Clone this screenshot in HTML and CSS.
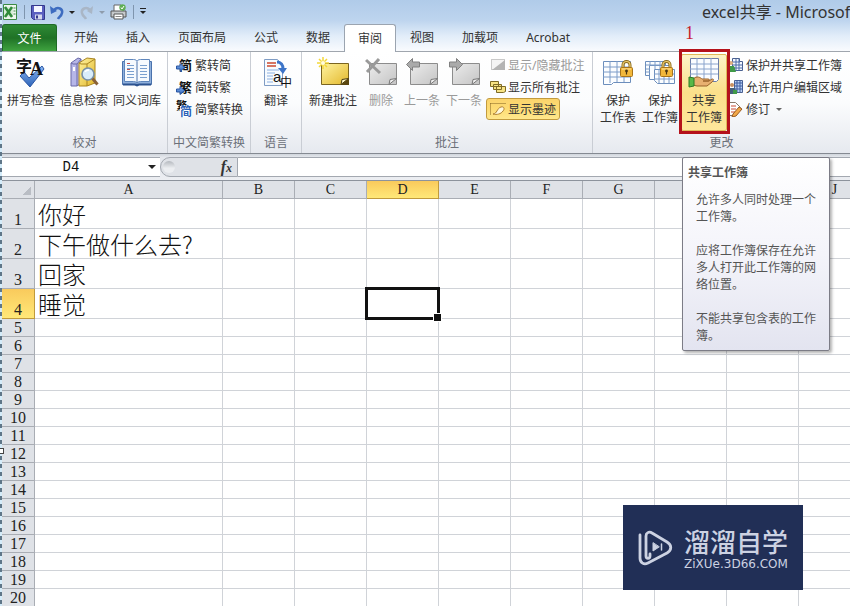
FILE: index.html
```html
<!DOCTYPE html>
<html lang="zh-CN">
<head>
    <meta charset="UTF-8">
    <meta name="viewport" content="width=device-width, initial-scale=1.0">
    <title>excel共享 - Microsoft Excel</title>
    <link rel="stylesheet" href="styles.css">
</head>
<body>
    <!-- shared symbols -->
    <svg class="defs" width="0" height="0">
        <defs>
            <linearGradient id="gold" x1="0" y1="0" x2="1" y2="1">
                <stop offset="0" stop-color="#fff3a0"/><stop offset="1" stop-color="#e3b82c"/>
            </linearGradient>
            <linearGradient id="grey" x1="0" y1="0" x2="1" y2="1">
                <stop offset="0" stop-color="#ececec"/><stop offset="1" stop-color="#c4c4c4"/>
            </linearGradient>
            <linearGradient id="blue" x1="0" y1="0" x2="0" y2="1">
                <stop offset="0" stop-color="#8cb6f0"/><stop offset="1" stop-color="#2a62b8"/>
            </linearGradient>
        </defs>
        <symbol id="lock" viewBox="0 0 13 17">
            <path d="M3 8V5a3.5 3.5 0 0 1 7 0v3" fill="none" stroke="#8a6a1c" stroke-width="3"/>
            <path d="M3 8V5a3.5 3.5 0 0 1 7 0v3" fill="none" stroke="#f0cf72" stroke-width="1.2"/>
            <rect x=".5" y="7.5" width="12" height="9" rx="1" fill="#f2b73a" stroke="#a8741a"/>
            <path d="M2 9h9" stroke="#ffe39a"/>
            <circle cx="6.5" cy="11" r="1.4" fill="#4a3410"/><path d="M6.5 11v3.5" stroke="#4a3410" stroke-width="1.2"/>
        </symbol>
        <symbol id="arrow" viewBox="0 0 9 9">
            <path d="M.5 3h3.500v-2.500l4.500 4-4.500 4v-2.500h-3.500z" fill="url(#blue)" stroke="#2a56a4"/>
        </symbol>
    </svg>

    <div class="app">
        <header class="window-head">
            <div class="title-bar">
                <div class="quick-access">
                    <svg width="16" height="18" viewBox="0 0 16 18"><path d="M1.500 1.500h13v15h-13z" fill="#eef6ee" stroke="#3c8a44"/><path d="M2 4h9v10H2z" fill="#d8ecd8"/><path d="M3 4l7 10M10 4L3 14" stroke="#2f8a3a" stroke-width="2.500"/><path d="M11.500 5h2M11.500 8h2M11.500 11h2" stroke="#3c8a44"/></svg>
                    <span class="sep"></span>
                    <button class="qa-btn" aria-label="保存"><svg width="14" height="15" viewBox="0 0 14 15"><path d="M.5.5h13v14h-11l-2-2z" fill="#5a5fc0" stroke="#34388c"/><path d="M3 1h8v6H3z" fill="#f4f6ff"/><path d="M4 9.500h7v5H4z" fill="#d5d8ec"/><path d="M5 10.500h2v3H5z" fill="#34388c"/></svg></button>
                    <button class="qa-btn" aria-label="撤消"><svg width="14" height="15" viewBox="0 0 14 15"><path d="M4 5c4-4 9-1 8 3-.5 3-3 4-4 6" fill="none" stroke="#3d6cc0" stroke-width="2.500"/><path d="M0 1l1 8 6-3z" fill="#3d6cc0"/></svg></button>
                    <span class="caret"></span>
                    <button class="qa-btn redo" aria-label="恢复"><svg width="14" height="15" viewBox="0 0 14 15"><path d="M10 5c-4-4-9-1-8 3 .5 3 3 4 4 6" fill="none" stroke="#a9b6c6" stroke-width="2.500"/><path d="M13 1l-1 8-5-3z" fill="#a9b6c6"/></svg></button>
                    <span class="caret dim"></span>
                    <button class="qa-btn" aria-label="快速打印"><svg width="17" height="16" viewBox="0 0 17 16"><path d="M4 7V1h7l2 2v4" fill="#fff" stroke="#666"/><path d="M1 7h15v6H1z" fill="#c6c9cc" stroke="#555"/><path d="M4 10h9v5H4z" fill="#fff" stroke="#555"/><path d="M5.500 12.500h6" stroke="#888"/><circle cx="12.500" cy="3.500" r="3.200" fill="#5fae54"/><path d="M11 3.500l1 1.500 2-3" fill="none" stroke="#fff"/></svg></button>
                    <span class="sep"></span>
                    <span class="caret bar"></span>
                </div>
                <div class="title">excel共享 - Microsoft Excel</div>
            </div>
            <nav class="tabs">
                <button class="tab file">文件</button>
                <button class="tab">开始</button>
                <button class="tab">插入</button>
                <button class="tab">页面布局</button>
                <button class="tab">公式</button>
                <button class="tab">数据</button>
                <button class="tab active">审阅</button>
                <button class="tab">视图</button>
                <button class="tab">加载项</button>
                <button class="tab">Acrobat</button>
            </nav>
        </header>

        <section class="ribbon">
            <div class="group proof">
                <div class="tools">
                    <button class="big"><svg class="glyph" width="32" height="32" viewBox="0 0 32 32"><path d="M5 19l4-4 5 6L27 9l2 3-14 18z" fill="url(#blue)" stroke="#2a56a4"/><text x="1" y="15" class="g-bold" font-size="16">字</text><text x="15" y="18" class="g-serif" font-size="18">A</text></svg><span>拼写检查</span></button>
                    <button class="big"><svg width="32" height="32" viewBox="0 0 32 32"><path d="M3 6l7-5 3 1v24l-4 3H3z" fill="#b6b6e8" stroke="#6a6aa8"/><path d="M3 6l2 1h4l4-5M9 7v22" fill="none" stroke="#6a6aa8"/><path d="M5 10h2v4H5z" fill="#fff"/><path d="M11 6l8-5 8 1v24l-8 3h-8z" fill="url(#gold)" stroke="#a98520"/><path d="M11 6l2 1h6l8-5M19 7v22" fill="none" stroke="#a98520"/><circle cx="20" cy="17" r="6" fill="#d9edfb" stroke="#7890a8" stroke-width="1.600"/><path d="M17 15c1-2 3-2 4-2" stroke="#fff" stroke-width="1.500" fill="none"/><path d="M24.500 21.500l5 6" stroke="#8a6238" stroke-width="3"/></svg><span>信息检索</span></button>
                    <button class="big"><svg width="32" height="32" viewBox="0 0 32 32"><path d="M1.500 4.500h29v23h-29z" fill="#8fb0dc" stroke="#4a72ac"/><path d="M2 27.500h12l2 1 2-1h12" fill="none" stroke="#2c5390" stroke-width="2"/><path d="M3.500 2.500h9c2 0 3.500 1 3.500 2 0-1 1.500-2 3.500-2h9v22h-9c-2 0-3.500 1-3.500 2 0-1-1.500-2-3.500-2h-9z" fill="#f6fafe" stroke="#5f86bc"/><path d="M16 5v21" stroke="#4a72ac"/><path d="M6 8.500h7M6 11.500h7M6 14.500h7M6 17.500h7M6 20.500h7M19 8.500h7M19 11.500h7M19 14.500h7M19 17.500h7M19 20.500h7" stroke="#7aa0cf"/><path d="M6 6.500h3M6 12.500h3" stroke="#c0504d"/></svg><span>同义词库</span></button>
                </div>
                <div class="group-name">校对</div>
            </div>

            <div class="group convert">
                <div class="tools stack">
                    <button class="small"><svg class="glyph" width="16" height="16" viewBox="0 0 16 16"><text x="3" y="13" class="g-bold" font-size="13">简</text><use href="#arrow" x="0" y="6" width="9" height="9"/></svg>繁转简</button>
                    <button class="small"><svg class="glyph" width="16" height="16" viewBox="0 0 16 16"><text x="3" y="13" class="g-bold" font-size="13">繁</text><use href="#arrow" x="0" y="7" width="9" height="9"/></svg>简转繁</button>
                    <button class="small"><svg class="glyph" width="16" height="16" viewBox="0 0 16 16"><text x="0" y="9" class="g-bold" font-size="11">繁</text><path d="M4 5h12v11H4z" fill="#fff"/><text x="4" y="15" class="g-bold g-blue" font-size="12">简</text></svg>简繁转换</button>
                </div>
                <div class="group-name">中文简繁转换</div>
            </div>

            <div class="group lang">
                <div class="tools">
                    <button class="big"><svg class="glyph" width="32" height="32" viewBox="0 0 32 32"><path d="M4.500 2.500h13l5 5v21h-18z" fill="#f7fbff" stroke="#7f9cc4"/><path d="M7 6h9M7 9h9" stroke="#cc4a30" stroke-width="1.500"/><path d="M7 13h12M7 16h8M7 19h6M7 22h6M7 25h6" stroke="#8db0e0"/><path d="M17 5c4 0 6 3 6 7" fill="none" stroke="#3d74c8" stroke-width="3"/><path d="M18 11h9l-4 6z" fill="#3d74c8"/><text x="13" y="25" class="g-sans" font-size="15">a</text><text x="20" y="30" class="g-sans" font-size="12">中</text></svg><span>翻译</span></button>
                </div>
                <div class="group-name">语言</div>
            </div>

            <div class="group comments">
                <div class="tools">
                    <button class="big wide"><svg width="32" height="32" viewBox="0 0 32 32"><path d="M4.500 6.500h27v21h-27z" fill="url(#gold)" stroke="#7a6420"/><path d="M24 27.500l1-5 6.500-1z" fill="#fff8c8" stroke="#4a3c10"/><path d="M24 28l8-7v7z" fill="#5a4610"/><path d="M6 0v12M0 6h12M2 2l8 8M10 2l-8 8" stroke="#f4d83a" stroke-width="1.500"/><circle cx="6" cy="6" r="2" fill="#fffbe0"/></svg><span>新建批注</span></button>
                    <button class="big narrow" disabled><svg width="32" height="32" viewBox="0 0 32 32"><path d="M4.500 6.500h27v21h-27z" fill="url(#grey)" stroke="#8c8c8c"/><path d="M24 27.500l1-5 6.500-1z" fill="#eee" stroke="#777"/><path d="M1 3l14 13M14 2L2 15" stroke="#9a9a9a" stroke-width="3"/></svg><span>删除</span></button>
                    <button class="big mid" disabled><svg width="32" height="32" viewBox="0 0 32 32"><path d="M4.500 6.500h27v21h-27z" fill="url(#grey)" stroke="#8c8c8c"/><path d="M24 27.500l1-5 6.500-1z" fill="#eee" stroke="#777"/><path d="M.5 7.500l6-6v3.500h7v5h-7v3.500z" fill="#aaa" stroke="#808080"/></svg><span>上一条</span></button>
                    <button class="big mid" disabled><svg width="32" height="32" viewBox="0 0 32 32"><path d="M4.500 6.500h27v21h-27z" fill="url(#grey)" stroke="#8c8c8c"/><path d="M24 27.500l1-5 6.500-1z" fill="#eee" stroke="#777"/><path d="M14.500 7.500l-6-6v3.500h-7v5h7v3.500z" fill="#aaa" stroke="#808080"/></svg><span>下一条</span></button>
                    <div class="stack">
                        <button class="small" disabled><svg width="16" height="16" viewBox="0 0 16 16"><path d="M1.500 2.500h13v10h-13z" fill="#f4f4f4" stroke="#999" stroke-dasharray="1 1"/><path d="M2 13L15 3v10z" fill="#b4b4b4"/></svg>显示/隐藏批注</button>
                        <button class="small"><svg width="16" height="16" viewBox="0 0 16 16"><path d="M.5 2.500h8v5h-8zM3.500 5.500h8v5h-8zM6.500 7.500h9v5l-2 1h-7z" fill="#f7e384" stroke="#7d6a26"/></svg>显示所有批注</button>
                        <button class="small pressed"><svg width="16" height="16" viewBox="0 0 16 16"><path d="M.5 2.500h15M.5 2.500v12" stroke="#806020" stroke-dasharray="1 1"/><path d="M3 13c4 0 4-6 8-7 3-1 4 2 2 4-2 3-6 4-10 3z" fill="#fff8dc" stroke="#b08030"/></svg>显示墨迹</button>
                    </div>
                </div>
                <div class="group-name">批注</div>
            </div>

            <div class="group changes">
                <div class="tools">
                    <button class="big mid"><svg width="32" height="32" viewBox="0 0 32 32"><path d="M1.500 4.500h27v21h-17l-2 2h-8z" fill="#fbfdff" stroke="#6c8ebc"/><path d="M1 10h27M1 15h27M1 20h27M8 4v22M15 4v21M22 4v21" stroke="#7c9cc8"/><use href="#lock" x="18" y="3" width="13" height="17"/></svg><span>保护<br>工作表</span></button>
                    <button class="big mid"><svg width="32" height="32" viewBox="0 0 32 32"><path d="M1.500 4.500h20v14h-20z" fill="#fbfdff" stroke="#6c8ebc"/><path d="M5.500 8.500h20v14h-20z" fill="#fbfdff" stroke="#6c8ebc"/><path d="M10.500 12.500h20v14h-17l-3-3z" fill="#fbfdff" stroke="#6c8ebc"/><path d="M2 8h19M2 12h4M2 15h4M6 4v4M11 4v8M16 4v8M10 17h20M10 22h20M15 12v14M20 12v14M25 12v14" stroke="#7c9cc8"/><use href="#lock" x="16" y="3" width="13" height="17"/></svg><span>保护<br>工作簿</span></button>
                    <div class="share">
                        <button class="big hot" aria-describedby="share-tip"><svg width="32" height="32" viewBox="0 0 32 32"><path d="M2.500 1.500h28v21l-2 2h-26z" fill="#fbfdff" stroke="#6c7ea8"/><path d="M2 7h28M2 12h28M2 17h28M9 1v23M16 1v23M23 1v23" stroke="#8aa4cc"/><path d="M5 22c4-4 8-1 9 0h6c2 0 2 2 0 2h-5 6l3-2c2 0 2 1 0 3l-5 4H9l-4-1z" fill="#e8b070" stroke="#9a6228"/><path d="M1 20l5 1v8l-5 1z" fill="#58b848" stroke="#2c7a24"/></svg><span>共享<br>工作簿</span></button>
                        <span class="marker"></span>
                        <span class="marker-no">1</span>
                        <div class="tip" id="share-tip" role="tooltip">
                            <h2>共享工作簿</h2>
                            <p>允许多人同时处理一个工作簿。</p>
                            <p>应将工作簿保存在允许多人打开此工作簿的网络位置。</p>
                            <p>不能共享包含表的工作簿。</p>
                        </div>
                    </div>
                    <div class="stack">
                        <button class="small"><svg width="16" height="16" viewBox="0 0 16 16"><path d="M4.500 1.500h7v3h3v9h-8v-3h-2z" fill="#f4f8ff" stroke="#4a6090"/><path d="M4 5h8M4 8h10M7 11h8M8 2v12M11 2v12" stroke="#4a6aa8"/><circle cx="3" cy="6" r="2" fill="#e0b080"/><path d="M0 9h6l2 6H0z" fill="#3f9a48"/></svg>保护并共享工作簿</button>
                        <button class="small"><svg width="16" height="16" viewBox="0 0 16 16"><path d="M6.500 1.500h8v12h-8z" fill="#b9d0f4" stroke="#4a6090"/><path d="M6 4h9M6 7h9M6 10h9M9 1v12M12 1v12" stroke="#3c5ca0"/><circle cx="4" cy="6" r="2" fill="#c89060"/><path d="M1 9h6l2 6H0z" fill="#44607c"/><path d="M5 11h4v4H5z" fill="#3f9a48"/></svg>允许用户编辑区域</button>
                        <button class="small"><svg width="16" height="16" viewBox="0 0 16 16"><path d="M1.500 1.500h6l5 5-5 8h-6z" fill="#fff" stroke="#8a7a6a"/><path d="M3 5h5M3 8h5M3 11h4" stroke="#c84a30"/><path d="M5 13l6-7 3 2-6 7-4 1z" fill="#f2a848" stroke="#9a5a20"/></svg>修订<span class="caret"></span></button>
                    </div>
                </div>
                <div class="group-name">更改</div>
            </div>
        </section>

        <div class="formula-bar">
            <label class="name-box"><input type="text" value="D4" aria-label="名称框"><span class="caret"></span></label>
            <div class="fx"><span class="knob"></span><i>f<small>x</small></i></div>
            <input class="formula" type="text" aria-label="编辑栏">
        </div>

        <main class="sheet">
            <table>
                <colgroup>
                    <col class="col-no"><col class="col-a">
                    <col><col><col><col><col><col><col><col><col>
                </colgroup>
                <thead><tr id="head"><th class="corner"></th></tr></thead>
                <tbody id="rows"></tbody>
            </table>
        </main>

        <span class="edge-handle"></span>

        <div class="brand">
            <svg width="36" height="38" viewBox="0 0 36 38" fill="none" stroke="#ccd2e2" stroke-width="2.800" stroke-linecap="round" stroke-linejoin="round"><path d="M3 6v23c0 5 4 7 8 5l19-10c5-3 5-8 0-11L15 4c-3-2-6 0-6 3v20c0 3 4 3 4 0v-2"/><path d="M16 14v8l6-4z" fill="#ccd2e2" stroke-width="1"/><path d="M24.500 15v6" stroke-width="1.500"/></svg>
            <div class="brand-text">
                <strong>溜溜自学</strong>
                <span>ZiXUe.3D66.COM</span>
            </div>
        </div>
    </div>

    <script>
        const columns = ['A', 'B', 'C', 'D', 'E', 'F', 'G', 'H', 'I', 'J'];
        const texts = ['你好', '下午做什么去?', '回家', '睡觉'];
        const active = { row: 4, col: 'D' };

        const head = document.getElementById('head');
        columns.forEach(name => {
            const th = document.createElement('th');
            th.textContent = name;
            if (name === active.col) th.className = 'current';
            head.appendChild(th);
        });

        const rows = document.getElementById('rows');
        for (let r = 1; r <= 20; r++) {
            const tr = document.createElement('tr');
            if (r <= texts.length) tr.className = 'tall';

            const th = document.createElement('th');
            th.textContent = r;
            if (r === active.row) th.className = 'current';
            tr.appendChild(th);

            columns.forEach(name => {
                const td = document.createElement('td');
                if (name === 'A' && texts[r - 1]) td.textContent = texts[r - 1];
                if (r === active.row && name === active.col) td.className = 'selected';
                tr.appendChild(td);
            });
            rows.appendChild(tr);
        }
    </script>
</body>
</html>
```
FILE: styles.css
```css
* {
    box-sizing: border-box;
}

body {
    margin: 0;
    height: 100vh;
    overflow: hidden;
    background: #fff;
    color: #333;
    font: 12px/17px "Noto Sans", "Noto Sans CJK SC", sans-serif;
}

button,
input {
    margin: 0;
    padding: 0;
    border: 0;
    background: none;
    color: inherit;
    font: inherit;
}

svg {
    display: block;
    flex: none;
}

.defs {
    position: absolute;
}

/* dashed selection edge of the window */
.app {
    position: relative;
    height: 100vh;
    padding-left: 2px;
    overflow: hidden;
    background: repeating-linear-gradient(#5f7688 0 4px, #d4ecfa 4px 8px);
}

.window-head {
    background: linear-gradient(#b0cbe9 0, #bdd4ee 20px, #e2edf9 36px, #f9fbfe 51px);
    border-bottom: 1px solid #a0a6ae;
}

/* title bar */
.title-bar {
    display: flex;
    align-items: center;
    height: 24px;
}

.quick-access {
    display: flex;
    align-items: center;
    flex: 1;
    gap: 5px;
    height: 20px;
}

.qa-btn {
    display: flex;
}

.sep {
    width: 1px;
    height: 14px;
    margin: 0 1px;
    background: #7f95ae;
}

.caret {
    width: 0;
    height: 0;
    border: 3px solid transparent;
    border-top: 3px solid #222;
    border-bottom: 0;
}

.caret.dim {
    border-top-color: #8e9cac;
}

.caret.bar {
    position: relative;
}

.caret.bar::before {
    content: "";
    position: absolute;
    left: -3px;
    top: -6px;
    width: 6px;
    height: 1px;
    background: #222;
}

.title {
    flex: 0 0 148px;
    min-width: 0;
    font-size: 16px;
    line-height: 24px;
    white-space: nowrap;
}

/* tabs */
.tabs {
    display: flex;
    height: 27px;
}

.tab {
    padding: 0 14px;
    white-space: nowrap;
}

.tab.file {
    width: 55px;
    margin-right: 3px;
    background: linear-gradient(#2f8a35, #1f7226 50%, #3fa33f);
    border: 1px solid #1e6a26;
    border-bottom: 0;
    border-radius: 3px 3px 0 0;
    color: #fff;
}

.tab.active {
    height: 28px;
    padding: 0 13px;
    background: #fff;
    border: 1px solid #9ba4b0;
    border-bottom: 0;
    border-radius: 3px 3px 0 0;
}

/* ribbon */
.ribbon {
    display: flex;
    height: 102px;
    background: linear-gradient(#fff, #fbfcfd 50%, #e6e9ef);
    border-bottom: 1px solid #858a92;
}

.group {
    display: flex;
    flex-direction: column;
    flex: none;
    padding-top: 2px;
    border-right: 1px solid #c9cdd4;
}

.tools {
    display: flex;
    align-items: flex-start;
    flex: 1;
}

.group-name {
    height: 19px;
    color: #6b7079;
    text-align: center;
}

.proof {
    width: 166px;
}

.proof .tools {
    gap: 1px;
    padding-left: 3px;
}

.convert {
    width: 83px;
}

.convert .stack {
    padding-left: 4px;
}

.convert .small {
    gap: 3px;
}

.lang {
    width: 51px;
}

.lang .tools {
    justify-content: center;
}

.comments {
    width: 291px;
}

.comments .tools {
    padding-left: 3px;
}

.changes {
    flex: 1;
    min-width: 0;
    border-right: 0;
}

.changes .tools {
    padding-left: 4px;
}

.big {
    display: flex;
    flex-direction: column;
    align-items: center;
    flex: none;
    gap: 3px;
    width: 52px;
    height: 77px;
    padding-top: 3px;
    white-space: nowrap;
}

.big.wide {
    width: 56px;
}

.big.narrow {
    width: 40px;
}

.big.mid {
    width: 42px;
}

.big.hot {
    width: 46px;
    padding-top: 2px;
    background: linear-gradient(#fdf3c8, #fbe08a 50%, #fde79c);
    border: 1px solid #e0b858;
    border-radius: 2px;
}

.stack {
    display: flex;
    flex-direction: column;
    align-items: flex-start;
    padding-left: 1px;
}

.small {
    display: flex;
    align-items: center;
    gap: 2px;
    height: 22px;
    padding: 0 3px;
    border: 1px solid transparent;
    border-radius: 3px;
    white-space: nowrap;
}

.small .caret {
    margin-left: 4px;
    border-top-color: #666;
}

.small.pressed {
    background: linear-gradient(#fbd46c, #fddc74 50%, #ffe78c);
    border-color: #c29b3e;
}

.changes .stack {
    padding-left: 0;
}

.changes .small {
    padding: 0;
}

button:disabled {
    color: #9a9a9a;
}

.glyph {
    overflow: visible;
}

.glyph text {
    fill: #111;
}

.g-bold {
    font-family: "Noto Sans CJK SC", sans-serif;
    font-weight: bold;
}

.g-serif {
    font-family: "Liberation Serif", serif;
    font-weight: bold;
}

.g-sans {
    font-family: "Liberation Sans", "Noto Sans CJK SC", sans-serif;
}

.glyph .g-blue {
    fill: #2a62b8;
}

/* highlighted command with its tooltip */
.share {
    position: relative;
}

.marker {
    position: absolute;
    inset: -5px -3px -3px -2px;
    border: 3px solid #b5121b;
    pointer-events: none;
}

.marker-no {
    position: absolute;
    left: 4px;
    top: -32px;
    color: #c8202c;
    font: 18px/22px "Liberation Serif", serif;
}

.tip {
    position: absolute;
    z-index: 2;
    left: 1px;
    top: 103px;
    width: 148px;
    padding: 6px 8px 6px 5px;
    background: linear-gradient(#fff, #f4f4fa 50%, #e3e4f0);
    border: 1px solid #7c7c86;
    border-radius: 2px;
    box-shadow: 2px 2px 3px rgba(0, 0, 0, 0.3);
    color: #555;
}

.tip h2 {
    margin: 0 0 10px;
    font-size: 12px;
    line-height: 17px;
}

.tip p {
    margin: 0 0 17px 8px;
}

.tip p:last-child {
    margin-bottom: 0;
}

/* formula bar */
.formula-bar {
    display: flex;
    height: 27px;
    padding: 3px 0;
    background: linear-gradient(#cfd4db, #e4e7ec 3px, #eceef2);
    border-bottom: 1px solid #8d939c;
}

.name-box {
    display: flex;
    align-items: center;
    width: 158px;
    padding-right: 4px;
    background: #fff;
    border: solid #a3a8b0;
    border-width: 1px 0;
}

.name-box input {
    width: 138px;
    margin-right: auto;
    text-align: center;
    color: #111;
    font: 14px/18px "Liberation Mono", monospace;
}

.name-box .caret {
    border-width: 4px 4px 0;
}

.fx {
    display: flex;
    align-items: center;
    justify-content: space-between;
    width: 78px;
    padding: 0 5px 0 2px;
    background: #dfe2e7;
    border: 1px solid #a3a8b0;
    border-radius: 10px 0 0 10px;
    font: bold 16px/18px "Liberation Serif", serif;
}

.fx small {
    font-size: 12px;
}

.knob {
    width: 12px;
    height: 12px;
    border-radius: 50%;
    background: linear-gradient(#b4b8be, #eceef1 60%);
}

.formula {
    flex: 1;
    min-width: 0;
    background: #fff;
    border: solid #a3a8b0;
    border-width: 1px 0;
}

/* sheet */
.sheet {
    overflow: hidden;
    background: #fff;
}

table {
    width: 869px;
    table-layout: fixed;
    border-collapse: separate;
    border-spacing: 0;
}

col {
    width: 72px;
}

.col-no {
    width: 33px;
}

.col-a {
    width: 188px;
}

th,
td {
    height: 18px;
    padding: 0;
    border: solid #d0d3d8;
    border-width: 0 1px 1px 0;
    vertical-align: bottom;
}

th {
    background: #dfe2e7;
    border-color: #a9adb4;
    color: #222;
    font: 16px/16px "Liberation Serif", serif;
}

thead th {
    font-size: 14px;
}

.corner {
    background: linear-gradient(135deg, transparent 50%, #b9bdc4 50%) 20px 5px / 9px 9px no-repeat #dfe2e7;
}

.tall th,
.tall td {
    height: 30px;
}

.tall td {
    padding-left: 3px;
    color: #111;
    font: 300 24px/28px "Noto Sans CJK SC", sans-serif;
    white-space: nowrap;
}

th.current {
    background: linear-gradient(#f9ca5c, #ffe878);
    border-color: #c09a3c;
}

.selected {
    position: relative;
}

.selected::before {
    content: "";
    position: absolute;
    inset: -2px;
    border: 3px solid #111;
}

.selected::after {
    content: "";
    position: absolute;
    right: -4px;
    bottom: -4px;
    width: 7px;
    height: 7px;
    background: #111;
    border: 1px solid #fff;
}

.edge-handle {
    position: absolute;
    left: -2px;
    top: 448px;
    width: 6px;
    height: 6px;
    background: #fff;
    border: 1px solid #444;
}

/* brand badge in the corner */
.brand {
    position: absolute;
    right: 47px;
    bottom: 16px;
    display: flex;
    align-items: center;
    gap: 11px;
    width: 180px;
    height: 85px;
    padding-left: 14px;
    background: #212f56;
    color: #ccd2e2;
}

.brand-text {
    display: flex;
    flex-direction: column;
}

.brand-text strong {
    font: 500 26px/32px "Noto Sans CJK SC", sans-serif;
}

.brand-text span {
    font: 12px/14px "DejaVu Sans", sans-serif;
}
```
